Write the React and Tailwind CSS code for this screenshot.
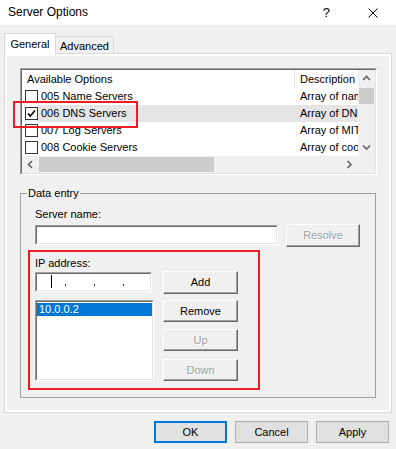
import React from 'react';

/* ─── small drawing helpers ─────────────────────────────── */
const Chev = ({ dir }) => {
  const pts = {
    up: '1,5 4.5,1.5 8,5',
    down: '1,1.5 4.5,5 8,1.5',
    left: '5,1 1.5,4.5 5,8',
    right: '1.5,1 5,4.5 1.5,8',
  }[dir];
  const w = dir === 'up' || dir === 'down' ? 9 : 7;
  const h = dir === 'up' || dir === 'down' ? 7 : 9;
  return (
    <svg width={w} height={h} viewBox={`0 0 ${w} ${h}`}>
      <polyline points={pts} fill="none" stroke="#606060" strokeWidth="1.6" />
    </svg>
  );
};

const Check = ({ on }) => (
  <div className="h-[13px] w-[13px] border border-[#333] bg-white">
    {on && (
      <svg width="11" height="11" viewBox="0 0 11 11">
        <polyline points="2,5.5 4.3,8 9,2.5" fill="none" stroke="#000" strokeWidth="1.7" />
      </svg>
    )}
  </div>
);

/* classic sunken edit / list frame */
const Sunken = ({ className = '', inner = '', children }) => (
  <div className={`border border-t-[#a0a0a0] border-l-[#a0a0a0] border-r-white border-b-white ${className}`}>
    <div className={`h-full w-full border border-t-[#696969] border-l-[#696969] border-r-[#e3e3e3] border-b-[#e3e3e3] bg-white ${inner}`}>
      {children}
    </div>
  </div>
);

/* classic raised push button */
const Btn = ({ children, disabled, className = '' }) => (
  <div
    className={`flex items-center justify-center border border-t-white border-l-white border-r-[#696969] border-b-[#696969]
                bg-[#f0f0f0] shadow-[inset_-1px_-1px_0_#a0a0a0]
                ${disabled ? 'text-[#a0a0a0] [text-shadow:1px_1px_0_#fff]' : ''} ${className}`}
  >
    {children}
  </div>
);

/* win10 dialog button */
const DlgBtn = ({ children, def }) => (
  <div
    className={`flex h-[22px] w-[73px] items-center justify-center bg-[#e1e1e1]
      ${def ? 'border-2 border-[#0078d7]' : 'border border-[#adadad]'}`}
  >
    {children}
  </div>
);

const rows = [
  { name: '005 Name Servers', desc: 'Array of name servers' },
  { name: '006 DNS Servers', desc: 'Array of DNS servers, by preference', on: true },
  { name: '007 Log Servers', desc: 'Array of MIT-LCS UDP log servers' },
  { name: '008 Cookie Servers', desc: 'Array of cookie servers, RFC 865' },
];

export default function App() {
  return (
    <div className="relative h-[449px] w-[396px] overflow-hidden bg-[#f0f0f0] font-['Liberation_Sans',Arial,sans-serif] text-[11px] leading-[13px] text-black">
      {/* title bar ------------------------------------------------------- */}
      <div className="flex h-[25px] items-center bg-white">
        <span className="ml-[8px] text-[12px]">Server Options</span>
        <span className="ml-auto text-[13px]">?</span>
        <svg className="ml-[38px] mr-[18px]" width="10" height="10" viewBox="0 0 10 10">
          <path d="M0.5 0.5 L9.5 9.5 M9.5 0.5 L0.5 9.5" stroke="#000" strokeWidth="1" />
        </svg>
      </div>

      <div className="px-[4px] pt-[8px]">
        {/* tabs ------------------------------------------------------------ */}
        <div className="relative z-10 flex h-[20px] items-start">
          <div className="flex h-[22px] w-[52px] items-center justify-center border border-b-0 border-[#d9d9d9] bg-white">
            General
          </div>
          <div className="mt-[3px] flex h-[17px] w-[58px] items-center justify-center border border-b-0 border-l-0 border-[#d9d9d9] pt-[2px]">
            Advanced
          </div>
        </div>

        {/* tab panel ------------------------------------------------------- */}
        <div className="h-[360px] border border-[#d9d9d9] bg-white p-[2px]">
          <div className="h-full bg-[#f0f0f0] pl-[13px] pt-[12px]">
            {/* list view */}
            <Sunken className="h-[107px] w-[357px]" inner="grid grid-cols-[336px_17px] grid-rows-[86px_17px] overflow-hidden">
              <div className="overflow-hidden bg-white">
                <div className="flex h-[18px] items-center whitespace-nowrap">
                  <div className="w-[272px] shrink-0 pl-[5px]">Available Options</div>
                  <div className="flex h-full w-[120px] shrink-0 items-center border-l border-[#e5e5e5] pl-[5px]">Description</div>
                </div>
                {rows.map(r => (
                  <div key={r.name} className="flex h-[17px] items-center whitespace-nowrap">
                    <div className="w-[16px] shrink-0 pl-[3px]"><Check on={r.on} /></div>
                    <div className={`flex h-full w-[400px] shrink-0 items-center ${r.on ? 'bg-[#e5e5e5]' : ''}`}>
                      <div className="w-[256px] shrink-0 pl-[3px]">{r.name}</div>
                      <div className="w-[140px] shrink-0 pl-[6px]">{r.desc}</div>
                    </div>
                  </div>
                ))}
              </div>

              {/* vertical scrollbar */}
              <div className="flex flex-col bg-[#f0f0f0]">
                <div className="flex h-[17px] items-center justify-center"><Chev dir="up" /></div>
                <div className="mx-[1px] mt-[1px] h-[16px] bg-[#cdcdcd]" />
                <div className="flex-1" />
                <div className="flex h-[17px] items-center justify-center"><Chev dir="down" /></div>
              </div>

              {/* horizontal scrollbar */}
              <div className="flex bg-[#f0f0f0]">
                <div className="flex w-[17px] items-center justify-center"><Chev dir="left" /></div>
                <div className="my-[1px] w-[175px] bg-[#cdcdcd]" />
                <div className="flex-1" />
                <div className="flex w-[17px] items-center justify-center"><Chev dir="right" /></div>
              </div>
              <div className="bg-[#f0f0f0]" />
            </Sunken>

            {/* data entry group */}
            <fieldset className="mt-[12px] w-[356px] border border-[#a0a0a0] p-0 pb-[7px]">
              <legend className="ml-[6px] px-[1px]">Data entry</legend>
              <div className="pl-[14px]">
                <div className="mt-[8px]">Server name:</div>
                <div className="mt-[3px] flex items-start">
                  <Sunken className="mt-[1px] h-[20px] w-[243px]" />
                  <Btn disabled className="ml-[8px] h-[23px] w-[74px]">Resolve</Btn>
                </div>

                {/* highlighted ip block */}
                <div className="-ml-[7px] mt-[3px] h-[140px] w-[232px] border-2 border-[#ec1c24] pl-[5px] pt-[5px]">
                  <div>IP address:</div>
                  <div className="mt-[1px] flex">
                    <div className="w-[119px]">
                      <Sunken className="mt-[1px] h-[20px] w-[117px]" inner="flex items-start">
                        <div className="flex w-[28px] justify-center pt-[1px]">
                          <div className="h-[13px] w-[1px] bg-black" />
                        </div>
                        <div className="mt-[10px] h-[2px] w-[1px] bg-[#333]" />
                        <div className="w-[28px]" />
                        <div className="mt-[10px] h-[2px] w-[1px] bg-[#333]" />
                        <div className="w-[28px]" />
                        <div className="mt-[10px] h-[2px] w-[1px] bg-[#333]" />
                      </Sunken>
                      <Sunken className="mt-[8px] h-[81px] w-[119px]">
                        <div className="mt-[1px] h-[13px] bg-[#0078d7] pl-[2px] text-white">10.0.0.2</div>
                      </Sunken>
                    </div>
                    <div className="ml-[9px] flex w-[75px] flex-col">
                      <Btn className="h-[23px]">Add</Btn>
                      <Btn className="mt-[6px] h-[22px]">Remove</Btn>
                      <Btn disabled className="mt-[7px] h-[22px]">Up</Btn>
                      <Btn disabled className="mt-[8px] h-[22px]">Down</Btn>
                    </div>
                  </div>
                </div>
              </div>
            </fieldset>
          </div>
        </div>
      </div>

      {/* dialog buttons -------------------------------------------------- */}
      <div className="mt-[8px] flex justify-end gap-[8px] pr-[7px]">
        <DlgBtn def>OK</DlgBtn>
        <DlgBtn>Cancel</DlgBtn>
        <DlgBtn>Apply</DlgBtn>
      </div>

      {/* annotation around the checked row */}
      <div className="absolute left-[13px] top-[101px] h-[27px] w-[125px] border-2 border-[#ec1c24]" />
    </div>
  );
}
